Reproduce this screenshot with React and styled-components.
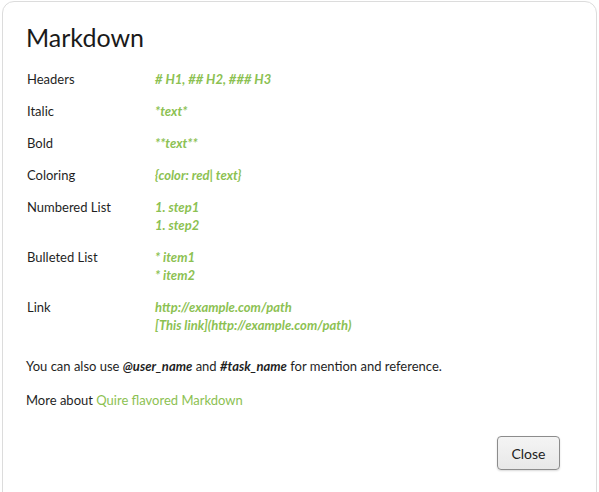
import React from 'react';
import styled, { createGlobalStyle } from 'styled-components';

const GlobalStyle = createGlobalStyle`
  html, body {
    margin: 0;
    padding: 0;
    background: #fff;
    overflow: hidden;
  }
  body {
    font-family: Lato, "Open Sans", sans-serif;
    color: #222;
  }
`;

const Dialog = styled.div`
  box-sizing: border-box;
  margin: 1px 0 0 2px;
  width: 595px;
  height: 520px;
  border: 1px solid #dcdcdc;
  border-radius: 12px;
  background: #fff;
  padding: 20px 36px 0 23px;
`;

const Title = styled.h1`
  margin: 0 0 18px;
  font-size: 25px;
  line-height: 30px;
  font-weight: 400;
  color: #1a1a1a;
`;

const SyntaxTable = styled.div`
  display: grid;
  grid-template-columns: 128px auto;
  row-gap: 14px;
  padding-left: 1px;
  font-size: 13px;
  line-height: 18px;
`;

const Label = styled.div`
  color: #1f1f1f;
`;

const Example = styled.div`
  color: #8cc152;
  font-weight: 700;
  font-style: italic;
`;

const Note = styled.p`
  margin: ${p => p.$top}px 0 0;
  font-size: 13px;
  line-height: 18px;
  color: #1f1f1f;

  b {
    font-style: italic;
  }
`;

const DocLink = styled.a`
  color: #8cc152;
  text-decoration: none;
`;

const Footer = styled.div`
  display: flex;
  justify-content: flex-end;
  margin-top: 27px;
`;

const Button = styled.button`
  width: 63px;
  height: 34px;
  font-family: Lato, "Open Sans", sans-serif;
  font-size: 14px;
  color: #222;
  background: linear-gradient(#f4f4f4, #e8e8e8);
  border: 1px solid #8c8c8c;
  border-radius: 4px;
  box-shadow: 0 1px 2px rgba(0, 0, 0, 0.15);
  cursor: pointer;
`;

const rows = [
  ['Headers', ['# H1, ## H2, ### H3']],
  ['Italic', ['*text*']],
  ['Bold', ['**text**']],
  ['Coloring', ['{color: red| text}']],
  ['Numbered List', ['1. step1', '1. step2']],
  ['Bulleted List', ['* item1', '* item2']],
  ['Link', ['http://example.com/path', '[This link](http://example.com/path)']],
];

export default function App() {
  return (
    <>
      <GlobalStyle />
      <Dialog>
        <Title>Markdown</Title>
        <SyntaxTable>
          {rows.map(([label, lines]) => (
            <React.Fragment key={label}>
              <Label>{label}</Label>
              <Example>
                {lines.map(line => (
                  <div key={line}>{line}</div>
                ))}
              </Example>
            </React.Fragment>
          ))}
        </SyntaxTable>
        <Note $top={23}>
          You can also use <b>@user_name</b> and <b>#task_name</b> for mention and reference.
        </Note>
        <Note $top={16}>
          More about <DocLink href="#">Quire flavored Markdown</DocLink>
        </Note>
        <Footer>
          <Button>Close</Button>
        </Footer>
      </Dialog>
    </>
  );
}
